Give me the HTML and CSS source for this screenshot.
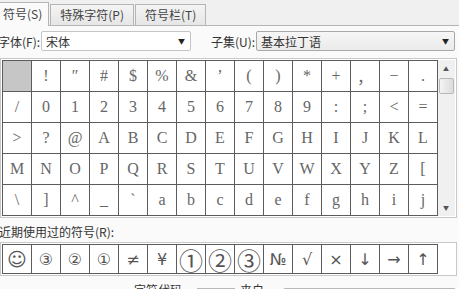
FILE: index.html
```html
<!DOCTYPE html>
<html lang="zh-CN">
<head>
    <meta charset="UTF-8">
    <title>符号</title>
    <link rel="stylesheet" href="styles.css">
</head>
<body>
    <div class="dialog">
        <div class="tabs">
            <div class="tab active">符号(S)</div>
            <div class="tab">特殊字符(P)</div>
            <div class="tab">符号栏(T)</div>
        </div>

        <div class="panel">
            <div class="font-row">
                <label class="lbl-font">字体(F):</label>
                <div class="select select-font"><span>宋体</span><i class="arrow">▼</i></div>
                <label class="lbl-subset">子集(U):</label>
                <div class="select select-subset"><span>基本拉丁语</span><i class="arrow">▼</i></div>
            </div>

            <div class="grid-box">
                <div class="grid" id="symbolGrid"></div>
                <div class="scrollbar">
                    <span class="sb-up">▲</span>
                    <span class="sb-thumb"></span>
                    <span class="sb-down">▼</span>
                </div>
            </div>

            <div class="recent-label">近期使用过的符号(R):</div>
            <div class="recent-box">
                <div class="recent" id="recentGrid"></div>
            </div>

            <div class="code-row">
                <span class="lbl-code">字符代码(C):</span>
                <span class="code-input">0000</span>
                <span class="lbl-from">来自(M):</span>
                <span class="select select-from">Unicode(十六进制)</span>
            </div>
        </div>
    </div>

    <script>
        // 基本拉丁语，从空格开始
        const symbols = [
            ' ', '!', '″', '#', '$', '%', '&', '’', '(', ')', '*', '+', '，', '−', '.',
            '/', '0', '1', '2', '3', '4', '5', '6', '7', '8', '9', ':', ';', '<', '=',
            '>', '?', '@', 'A', 'B', 'C', 'D', 'E', 'F', 'G', 'H', 'I', 'J', 'K', 'L',
            'M', 'N', 'O', 'P', 'Q', 'R', 'S', 'T', 'U', 'V', 'W', 'X', 'Y', 'Z', '[',
            '\\', ']', '^', '_', '`', 'a', 'b', 'c', 'd', 'e', 'f', 'g', 'h', 'i', 'j'
        ];

        // 近期使用过的符号
        const recent = ['☺', '③', '②', '①', '≠', '¥', '①', '②', '③', '№', '√', '×', '↓', '→', '↑'];

        const grid = document.getElementById('symbolGrid');
        symbols.forEach((ch, i) => {
            const cell = document.createElement('div');
            cell.className = i === 0 ? 'cell selected' : 'cell';
            cell.textContent = ch;
            grid.appendChild(cell);
        });

        const recentGrid = document.getElementById('recentGrid');
        recent.forEach((ch, i) => {
            const cell = document.createElement('div');
            cell.className = (i >= 6 && i <= 8) ? 'rcell big' : 'rcell';
            cell.textContent = ch;
            recentGrid.appendChild(cell);
        });
    </script>
</body>
</html>
```

FILE: styles.css
```css
body {
    margin: 0;
    width: 459px;
    height: 289px;
    overflow: hidden;
    font-family: "Noto Sans CJK SC", "Noto Sans", sans-serif;
    font-size: 12px;
    color: #333;
    background-color: #f0f0f0;
}
.dialog {
    width: 459px;
}
.tabs {
    display: flex;
    align-items: flex-end;
    height: 25px;
}
.tab {
    height: 20px;
    line-height: 20px;
    padding: 0 9px;
    margin-right: 1px;
    border: 1px solid #b5b5b5;
    border-bottom: none;
    background: linear-gradient(#f4f4f4, #e6e6e6);
    color: #444;
}
.tab.active {
    height: 23px;
    line-height: 22px;
    padding: 0 6px 0 3px;
    background-color: #fafafa;
    background-image: none;
    border-left: none;
    margin-bottom: -1px;
    position: relative;
}
.panel {
    border-top: 1px solid #b5b5b5;
    background-color: #fafafa;
    height: 263px;
}

/* 字体、子集 */
.font-row {
    display: flex;
    align-items: center;
    height: 20px;
    margin-top: 5px;
}
.lbl-font {
    width: 43px;
    margin-left: -2px;
}
.lbl-subset {
    width: 45px;
    margin-left: 20px;
}
.select {
    box-sizing: border-box;
    display: flex;
    align-items: center;
    justify-content: space-between;
    height: 20px;
    padding: 0 5px 0 4px;
    border: 1px solid #c5c5c5;
    border-radius: 2px;
    background-color: #fff;
    color: #333;
}
.select-font {
    width: 150px;
}
.select-subset {
    width: 199px;
    border-color: #a8a8a8;
    background: linear-gradient(#f6f6f6, #ebebeb);
}
.arrow {
    font-style: normal;
    font-size: 7px;
    color: #222;
}

/* 符号表 */
.grid-box {
    display: flex;
    box-sizing: border-box;
    width: 457px;
    margin-top: 7px;
    padding: 1px;
    border: 1px solid #c8c8c8;
    background-color: #fff;
}
.grid {
    display: grid;
    grid-template-columns: repeat(15, 28px);
    grid-auto-rows: 30px;
    gap: 1px;
    border: 1px solid #5c5c5c;
    background-color: #5c5c5c;
}
.cell, .rcell {
    display: flex;
    align-items: center;
    justify-content: center;
    background-color: #fff;
    font-family: "Liberation Serif", "DejaVu Serif", serif;
    font-size: 16px;
    color: #666;
}
.cell.selected {
    background-color: #c6c6c6;
}
.scrollbar {
    position: relative;
    width: 17px;
    background-color: #f0f0f0;
}
.sb-up, .sb-down {
    position: absolute;
    left: 5px;
    font-size: 6px;
    color: #555;
}
.sb-up {
    top: 4px;
}
.sb-down {
    bottom: 4px;
}
.sb-thumb {
    position: absolute;
    top: 18px;
    left: 1px;
    width: 13px;
    height: 14px;
    border: 1px solid #b8b8b8;
    border-radius: 2px;
    background: linear-gradient(90deg, #f4f4f4, #dcdcdc);
}

/* 近期使用过的符号 */
.recent-label {
    margin-top: 6px;
    height: 16px;
    line-height: 16px;
    margin-left: -1px;
}
.recent-box {
    box-sizing: border-box;
    width: 457px;
    margin-top: 2px;
    padding: 1px;
    border: 1px solid #c8c8c8;
    background-color: #fff;
}
.recent {
    display: grid;
    grid-template-columns: repeat(15, 28px);
    grid-auto-rows: 28px;
    gap: 1px;
    width: max-content;
    border: 1px solid #5c5c5c;
    background-color: #5c5c5c;
}
.rcell {
    font-family: "DejaVu Sans", "Noto Sans CJK SC", sans-serif;
    font-size: 16px;
    color: #555;
}
.rcell:first-child {
    font-size: 19px;
}
.rcell.big {
    font-size: 24px;
    font-family: "Noto Sans CJK SC", sans-serif;
}

/* 字符代码 */
.code-row {
    display: flex;
    align-items: center;
    margin-top: 5px;
    padding-left: 134px;
}
.lbl-code {
    width: 63px;
}
.code-input {
    box-sizing: border-box;
    width: 38px;
    height: 20px;
    padding: 0 4px;
    border: 1px solid #b8b8b8;
    background-color: #fff;
}
.lbl-from {
    width: 43px;
    margin-left: 5px;
}
.select-from {
    width: 173px;
    border-color: #b8b8b8;
}
```
